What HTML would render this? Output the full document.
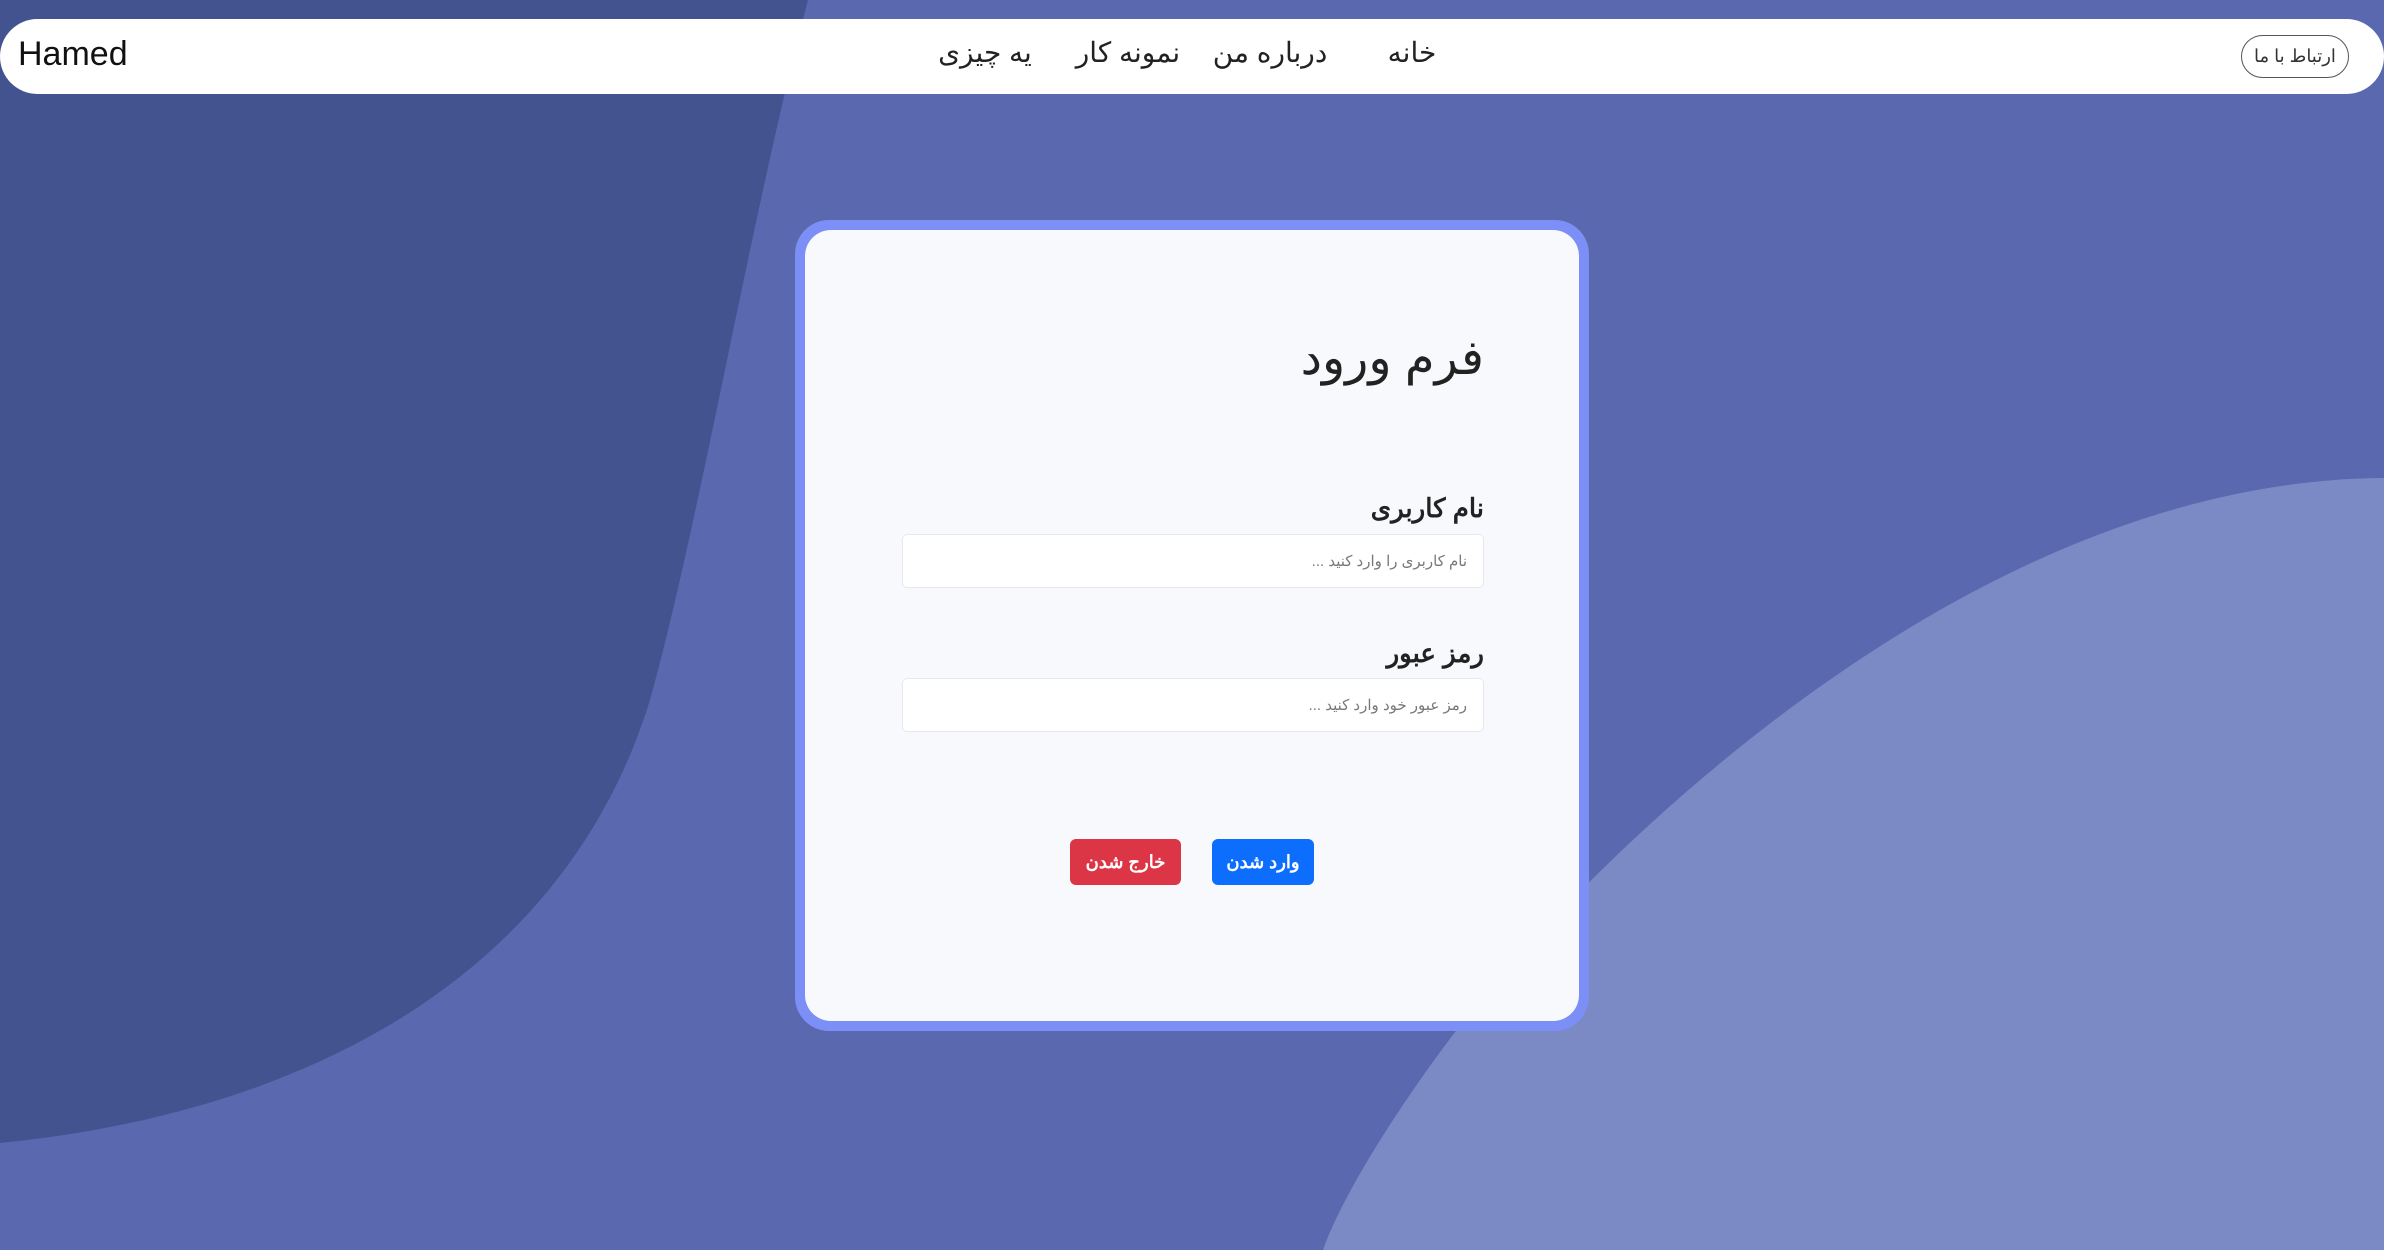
<!DOCTYPE html>
<html><head><meta charset="utf-8"><style>
*{margin:0;padding:0;box-sizing:border-box}
html,body{width:2384px;height:1250px;overflow:hidden;background:#5a68b0;font-family:"Liberation Sans","Noto Sans CJK SC",sans-serif}
svg.bg{position:absolute;left:0;top:0}
.nav{position:absolute;left:0;top:19px;width:2384px;height:75px;background:#fff;border-radius:38px}
.brand{position:absolute;left:18px;top:18px;font-size:34px;color:#111;line-height:1}
.nav .it{position:absolute;top:20px;font-size:28px;color:#222;line-height:1;transform:translateX(-50%);white-space:nowrap}
.cbtn{position:absolute;left:2241px;width:108px;height:43px;border:1.5px solid #555;border-radius:22px;font-size:18px;color:#333;display:flex;align-items:center;justify-content:center}
.card{position:absolute;left:795px;top:220px;width:794px;height:811px;background:#7b8ff7;border-radius:34px;padding:10px}
.in{width:100%;height:100%;background:#f8f9fc;border-radius:26px;position:relative}
.ttl{position:absolute;right:95px;top:100px;font-size:48px;color:#222;direction:rtl}
.lbl{position:absolute;right:95px;font-size:26px;font-weight:bold;color:#222;direction:rtl}
.inp{position:absolute;left:97px;width:582px;height:54px;background:#fff;border:1px solid #e6e8ee;border-radius:5px;font-size:15px;color:#777;direction:rtl;padding-right:16px;display:flex;align-items:center}
.btn{position:absolute;top:609px;height:46px;border-radius:6px;color:#fff;font-size:18px;font-weight:bold;display:flex;align-items:center;justify-content:center}
</style></head><body>
<svg class="bg" width="2384" height="1250" viewBox="0 0 2384 1250">
<path d="M0,0 L808,0 C750,220 700,520 650,700 C570,960 330,1110 0,1143 Z" fill="#43538f"/>
<path d="M2384,478 C2000,480 1650,800 1480,1000 C1400,1100 1340,1200 1323,1250 L2384,1250 Z" fill="#7b89c4"/>
</svg>
<div class="nav">
<div class="brand">Hamed</div>
<div class="it" style="left:1412px">خانه</div>
<div class="it" style="left:1270px">درباره من</div>
<div class="it" style="left:1128px">نمونه کار</div>
<div class="it" style="left:985px">یه چیزی</div>
<div class="cbtn" style="top:16px">ارتباط با ما</div>
</div>
<div class="card"><div class="in">
<div class="ttl">فرم ورود</div>
<div class="lbl" style="top:263px">نام کاربری</div>
<div class="inp" style="top:304px">نام کاربری را وارد کنید ...</div>
<div class="lbl" style="top:408px">رمز عبور</div>
<div class="inp" style="top:448px">رمز عبور خود وارد کنید ...</div>
<div class="btn" style="left:265px;width:111px;background:#dc3545">خارج شدن</div>
<div class="btn" style="left:407px;width:102px;background:#0d6efd">وارد شدن</div>
</div></div>
</body></html>
